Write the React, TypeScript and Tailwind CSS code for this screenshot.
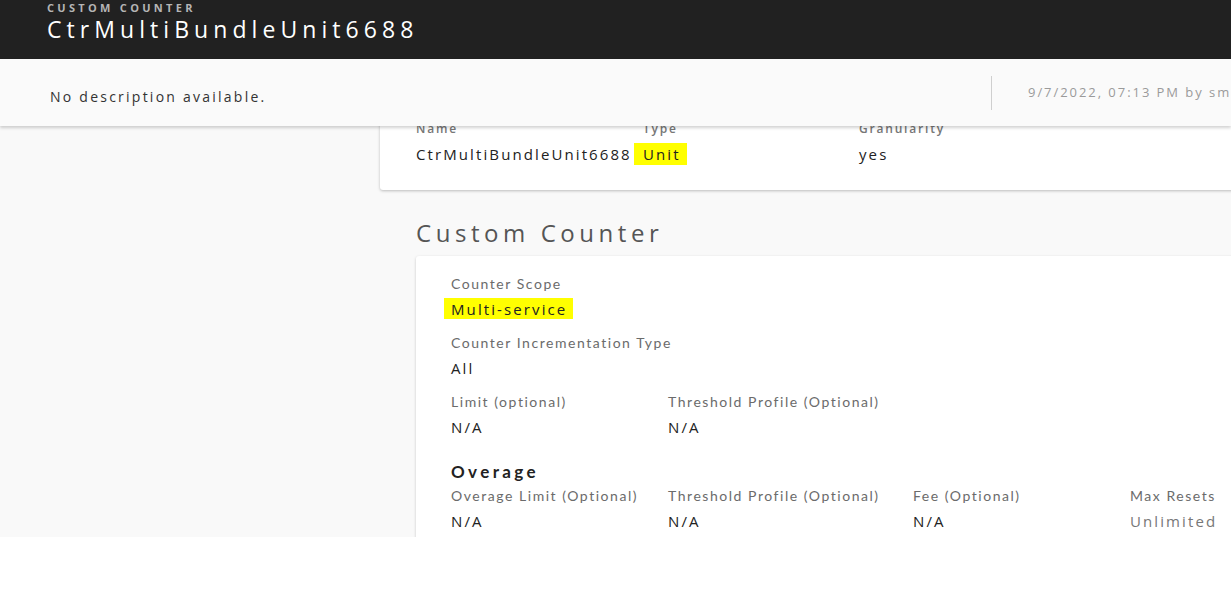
const geo = "font-['Open_Sans',sans-serif]";
const lato = "font-['Lato',sans-serif]";

const Label = ({ children }: { children: React.ReactNode }) => (
  <div className={`${lato} h-[18px] whitespace-nowrap text-[14px] leading-[18px] tracking-[0.11em] text-[#6b6b6b]`}>
    {children}
  </div>
);

const Value = ({ children, muted }: { children: React.ReactNode; muted?: boolean }) => (
  <div
    className={`${geo} mt-[5px] h-[22px] text-[15px] leading-[22px] tracking-[0.14em] ${
      muted ? "text-[#777]" : "text-[#222]"
    }`}
  >
    {children}
  </div>
);

const App = () => {
  return (
    <div className="h-[537px] w-[1231px] overflow-hidden bg-[#f9f9f9]">
      <div className="h-[59px] bg-[#212121] pl-[47px]">
        <p className={`${geo} text-[11px] font-bold leading-[15px] tracking-[0.3em] text-[#b5b5b5]`}>
          CUSTOM COUNTER
        </p>
        <p className={`${geo} text-[23px] leading-[28px] tracking-[0.22em] text-white`}>
          CtrMultiBundleUnit6688
        </p>
      </div>

      <div className="relative z-10 flex h-[67px] items-center bg-[#fafafa] shadow-[0_2px_3px_rgba(0,0,0,0.18)]">
        <p className={`${geo} w-[991px] shrink-0 pl-[50px] pt-[8px] text-[14px] tracking-[0.16em] text-[#333]`}>
          No description available.
        </p>
        <div className="h-[34px] w-px shrink-0 bg-[#cfcfcf]" />
        <p className={`${geo} ml-[36px] whitespace-nowrap text-[13px] tracking-[0.15em] text-[#9a9a9a]`}>
          9/7/2022, 07:13 PM by sm
        </p>
      </div>

      <div className="pl-[380px]">
        <div className="-mt-[20px] w-[1000px] rounded-[3px] bg-white pb-[25px] pl-[36px] pt-[15px] shadow-[0_1px_3px_rgba(0,0,0,0.25)]">
          <div className={`${geo} flex h-[16px] text-[12px] font-semibold leading-[16px] tracking-[0.15em] text-[#777]`}>
            <span className="w-[227px]">Name</span>
            <span className="w-[216px]">Type</span>
            <span>Granularity</span>
          </div>
          <div className={`${geo} mt-[6px] flex h-[22px] text-[15px] leading-[22px] tracking-[0.14em] text-[#222]`}>
            <span className="w-[227px] whitespace-nowrap">CtrMultiBundleUnit6688</span>
            <span className="w-[216px]">
              <span className="-ml-[9px] bg-[#ffff00] py-[1px] pl-[9px] pr-[6px]">Unit</span>
            </span>
            <span>yes</span>
          </div>
        </div>

        <div className="pl-[36px]">
          <h2 className={`${geo} mt-[27px] h-[32px] text-[24px] leading-[32px] tracking-[0.19em] text-[#555]`}>
            Custom Counter
          </h2>
          <div className="mt-[7px] h-[300px] w-[1000px] rounded-[3px] bg-white pl-[35px] pt-[19px] shadow-[0_1px_3px_rgba(0,0,0,0.2)]">
            <Label>Counter Scope</Label>
            <Value>
              <span className="-ml-[7px] inline-block h-[21px] bg-[#ffff00] pl-[7px] pr-[6px]">Multi-service</span>
            </Value>

            <div className="mt-[14px]">
              <Label>Counter Incrementation Type</Label>
              <Value>All</Value>
            </div>

            <div className="mt-[14px] grid grid-cols-[217px_245px]">
              <div>
                <Label>Limit (optional)</Label>
                <Value>N/A</Value>
              </div>
              <div>
                <Label>Threshold Profile (Optional)</Label>
                <Value>N/A</Value>
              </div>
            </div>

            <h3 className={`${lato} mt-[23px] h-[22px] text-[17px] font-bold leading-[22px] tracking-[0.2em] text-[#222]`}>
              Overage
            </h3>
            <div className="mt-[4px] grid grid-cols-[217px_245px_217px_200px]">
              <div>
                <Label>Overage Limit (Optional)</Label>
                <Value>N/A</Value>
              </div>
              <div>
                <Label>Threshold Profile (Optional)</Label>
                <Value>N/A</Value>
              </div>
              <div>
                <Label>Fee (Optional)</Label>
                <Value>N/A</Value>
              </div>
              <div>
                <Label>Max Resets</Label>
                <Value muted>Unlimited</Value>
              </div>
            </div>
          </div>
        </div>
      </div>
    </div>
  );
};

export default App;
